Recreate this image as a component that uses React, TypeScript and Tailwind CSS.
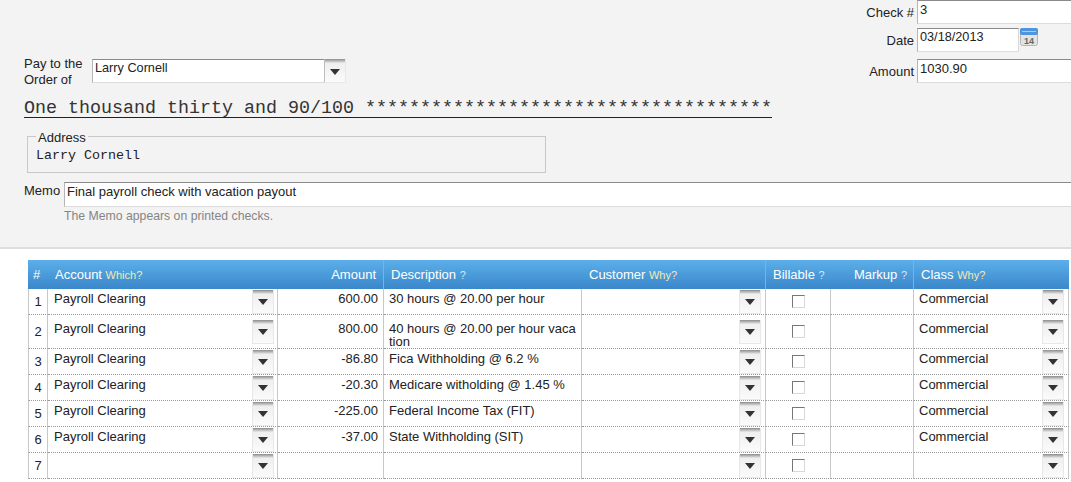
import React from 'react';

interface PayrollRow {
  id: number;
  account: string;
  amount: string;
  description: string;
  itemClass: string;
  tall?: boolean;
}

const rows: PayrollRow[] = [
  { id: 1, account: 'Payroll Clearing', amount: '600.00', description: '30 hours @ 20.00 per hour', itemClass: 'Commercial' },
  { id: 2, account: 'Payroll Clearing', amount: '800.00', description: '40 hours @ 20.00 per hour vaca tion', itemClass: 'Commercial', tall: true },
  { id: 3, account: 'Payroll Clearing', amount: '-86.80', description: 'Fica Withholding @ 6.2 %', itemClass: 'Commercial' },
  { id: 4, account: 'Payroll Clearing', amount: '-20.30', description: 'Medicare witholding @ 1.45 %', itemClass: 'Commercial' },
  { id: 5, account: 'Payroll Clearing', amount: '-225.00', description: 'Federal Income Tax (FIT)', itemClass: 'Commercial' },
  { id: 6, account: 'Payroll Clearing', amount: '-37.00', description: 'State Withholding (SIT)', itemClass: 'Commercial' },
  { id: 7, account: '', amount: '', description: '', itemClass: '' },
];

const inputBorder = 'border border-t-[#8a8a8a] border-l-[#b5b5b5] border-r-[#d8d8d8] border-b-[#dcdcdc] bg-white';
const cellBorder = 'border-r border-b border-r-[#c8c8c8] border-b-[#999] [border-bottom-style:dotted]';
const headCell = 'bg-linear-to-b from-[#5cafea] to-[#3a87ca] font-normal';

const ArrowButton = ({ className = '' }: { className?: string }) => (
  <div className={`flex h-[24px] w-[22px] shrink-0 items-center justify-center border-r border-b border-l border-[#e8e8e8] bg-linear-to-b from-[#8c8c8c] via-[#efefef] via-[18%] to-[#fbfbfb] ${className}`}>
    <svg width="10" height="6" viewBox="0 0 10 6" className="mt-[2px]">
      <path d="M0 0h10L5 6z" fill="#333" />
    </svg>
  </div>
);

const CalendarIcon = () => (
  <svg width="18" height="18" viewBox="0 0 18 18" className="ml-[1px] shrink-0">
    <rect x="0.5" y="0.5" width="17" height="17" rx="2" fill="#e4e4e0" stroke="#b4b8bc" />
    <rect x="0" y="0" width="18" height="7" rx="2" fill="#4f94dc" />
    <rect x="2" y="3" width="14" height="1" fill="#a9cdf0" />
    <text x="9" y="16" textAnchor="middle" fontSize="9" fontWeight="700" fill="#666" fontFamily="Liberation Sans, sans-serif">14</text>
  </svg>
);

const SelectCell = ({ text, pad }: { text: string; pad: string }) => (
  <div className={`flex items-center justify-between ${pad}`}>
    <span className="pb-[7px]">{text}</span>
    <ArrowButton />
  </div>
);

const HeaderHint = ({ children }: { children: React.ReactNode }) => (
  <span className="text-[11px] text-[#f6e9b0]">{children}</span>
);

const HeaderMark = () => <span className="text-[11px] text-[#d3e9f9]">?</span>;

const App = () => {
  return (
    <div className="h-[482px] w-[1071px] overflow-hidden bg-white font-['Liberation_Sans',Arial,sans-serif] text-[13px] leading-[15px] text-[#222]">
      <div className="h-[249px] border-b-2 border-[#dedede] bg-[#f3f3f3]">
        <div className="flex h-[182px] justify-between">
          <div className="w-[772px] pt-[56px] pl-[24px]">
            <div className="flex">
              <div className="w-[68px] leading-[16px]">Pay to the<br />Order of</div>
              <div className={`mt-[3px] flex h-[24px] w-[254px] ${inputBorder}`}>
                <div className="flex-1 pt-[1px] pl-[2px] text-[12.7px]">Larry Cornell</div>
                <ArrowButton className="-mt-px -mr-px border-l-[#bdbdbd]" />
              </div>
            </div>
            <div className="mt-[8px] border-b border-[#222] pt-[5px] font-['Liberation_Mono',monospace] text-[18.33px] leading-[16px] whitespace-nowrap text-[#333]">
              One thousand thirty and 90/100 *************************************
            </div>
            <fieldset className="mt-[9px] ml-[3px] h-[46px] w-[519px] border border-[#c8c8c8] pl-[8px]">
              <legend className="px-[2px] pt-[4px] leading-[14px]">Address</legend>
              <div className="mt-[3px] font-['Liberation_Mono',monospace] text-[13.33px]">Larry Cornell</div>
            </fieldset>
          </div>
          <div className="w-[205px]">
            <div className="flex">
              <div className="w-[51px] shrink-0 pt-[5px] pr-[3px] text-right whitespace-nowrap">Check #</div>
              <div className={`h-[24px] flex-1 border-r-0 pt-[1px] pl-[2px] ${inputBorder}`}>3</div>
            </div>
            <div className="mt-[4px] flex">
              <div className="w-[51px] shrink-0 pt-[5px] pr-[3px] text-right">Date</div>
              <div className={`h-[24px] w-[102px] pt-[1px] pl-[2px] text-[12.7px] ${inputBorder}`}>03/18/2013</div>
              <CalendarIcon />
            </div>
            <div className="mt-[7px] flex">
              <div className="w-[51px] shrink-0 pt-[5px] pr-[3px] text-right">Amount</div>
              <div className={`h-[24px] flex-1 border-r-0 pt-[1px] pl-[2px] ${inputBorder}`}>1030.90</div>
            </div>
          </div>
        </div>
        <div className="flex pl-[24px]">
          <div className="w-[40px] pt-[1px]">Memo</div>
          <div className="flex-1">
            <div className={`h-[25px] border-r-0 pl-[2px] leading-[17px] ${inputBorder}`}>Final payroll check with vacation payout</div>
            <div className="mt-[2px] text-[12.25px] text-[#858585]">The Memo appears on printed checks.</div>
          </div>
        </div>
      </div>

      <table className="mt-[11px] ml-[28px] w-[1041px] table-fixed border-separate border-spacing-0">
        <colgroup>
          <col className="w-[20px]" />
          <col className="w-[230px]" />
          <col className="w-[106px]" />
          <col className="w-[198px]" />
          <col className="w-[184px]" />
          <col className="w-[65px]" />
          <col className="w-[83px]" />
          <col className="w-[155px]" />
        </colgroup>
        <thead>
          <tr className="text-white">
            <th className={`h-[29px] pl-[5px] text-left ${headCell}`}>#</th>
            <th className={`pl-[7px] text-left ${headCell}`}>Account <HeaderHint>Which?</HeaderHint></th>
            <th className={`border-r border-[#6db6ee] pr-[7px] text-right ${headCell}`}>Amount</th>
            <th className={`pl-[7px] text-left ${headCell}`}>Description <HeaderMark /></th>
            <th className={`border-r border-[#6db6ee] pl-[7px] text-left ${headCell}`}>Customer <HeaderHint>Why?</HeaderHint></th>
            <th className={`pl-[7px] text-left whitespace-nowrap ${headCell}`}>Billable <HeaderMark /></th>
            <th className={`border-r border-[#6db6ee] pr-[6px] text-right whitespace-nowrap ${headCell}`}>Markup <HeaderMark /></th>
            <th className={`pl-[7px] text-left ${headCell}`}>Class <HeaderHint>Why?</HeaderHint></th>
          </tr>
        </thead>
        <tbody>
          {rows.map((row) => (
            <tr key={row.id}>
              <td className={`border-l border-l-[#c8c8c8] text-center ${cellBorder} ${row.tall ? 'h-[34px]' : 'h-[26px]'}`}>{row.id}</td>
              <td className={cellBorder}><SelectCell text={row.account} pad="pl-[6px] pr-[3px]" /></td>
              <td className={`pr-[5px] pb-[7px] text-right ${cellBorder}`}>{row.amount}</td>
              <td className={`pl-[5px] whitespace-nowrap ${row.tall ? 'pt-[6px] leading-[13px]' : 'pb-[7px]'} ${cellBorder}`}>
                {row.tall ? <>40 hours @ 20.00 per hour vaca<br />tion</> : row.description}
              </td>
              <td className={cellBorder}><SelectCell text="" pad="pl-[6px] pr-[4px]" /></td>
              <td className={cellBorder}>
                <div className="mx-auto h-[13px] w-[13px] border border-t-[#777] border-l-[#777] border-r-[#d8d8d8] border-b-[#d8d8d8] bg-white" />
              </td>
              <td className={cellBorder} />
              <td className={cellBorder}><SelectCell text={row.itemClass} pad="pl-[5px] pr-[4px]" /></td>
            </tr>
          ))}
        </tbody>
      </table>
    </div>
  );
};

export default App;
